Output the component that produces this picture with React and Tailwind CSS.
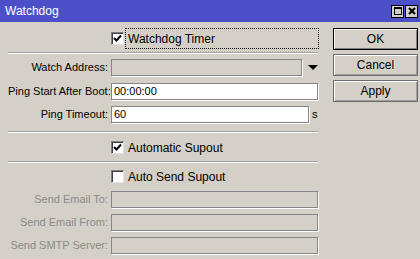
import React from "react";

const font = { fontFamily: '"Liberation Sans", Arial, sans-serif' };

function Check({ checked }) {
  return (
    <div className="w-[13px] h-[13px] bg-white border border-t-[#808080] border-l-[#808080] border-b-[#e0e0e0] border-r-[#e0e0e0] shadow-[inset_1px_1px_0_#404040] flex items-center justify-center shrink-0">
      {checked && (
        <svg width="9" height="9" viewBox="0 0 9 9">
          <path d="M1 4 L3.5 6.5 L8 1.5" stroke="#000" strokeWidth="2" fill="none" />
        </svg>
      )}
    </div>
  );
}

function Sep() {
  return <div className="h-[2px] border-t border-t-[#a0a0a0] border-b border-b-white w-[310px]" />;
}

function Field({ label, value, disabled, mt, after, width = "w-[207px]" }) {
  return (
    <div className={`flex items-center h-[17px] ${mt}`}>
      <div className={`w-[103px] pr-[3px] text-right whitespace-nowrap ${disabled ? "text-[#8a8a8a]" : "text-black"}`}>
        {label}
      </div>
      <div
        className={`${width} h-[17px] border border-[#858585] shadow-[1px_1px_0_#fff] px-[2px] flex items-center ${
          disabled ? "bg-[#d4d0c8]" : value !== undefined ? "bg-white" : "bg-[#d4d0c8]"
        }`}
      >
        {value}
      </div>
      {after}
    </div>
  );
}

function Btn({ children, def, mt }) {
  return (
    <div
      className={`w-[85px] h-[22px] flex items-center justify-center ${mt} ${
        def ? "border border-black shadow-[inset_1px_1px_0_#fff,inset_-1px_-1px_0_#808080]" : "border border-[#6a6a6a] shadow-[inset_1px_1px_0_#fff,inset_-1px_-1px_0_#a0a0a0]"
      }`}
    >
      {children}
    </div>
  );
}

export default function App() {
  return (
    <div className="w-[420px] h-[259px] bg-[#d4d0c8] text-[11px] text-black overflow-hidden" style={font}>
      {/* TITLE BAR */}
      <div className="h-[22px] bg-[#4b50c9] flex items-center justify-between pl-[5px] pr-[2px]">
        <span className="text-white text-[12px]">Watchdog</span>
        <div className="flex gap-[1px]">
          <div className="w-[13px] h-[13px] bg-[#d4d0c8] border border-black flex items-center justify-center">
            <div className="w-[8px] h-[8px] border border-black border-t-2" />
          </div>
          <div className="w-[13px] h-[13px] bg-[#d4d0c8] border border-black flex items-center justify-center">
            <svg width="8" height="8" viewBox="0 0 8 8">
              <path d="M1 1 L7 7 M7 1 L1 7" stroke="#000" strokeWidth="2" />
            </svg>
          </div>
        </div>
      </div>

      <div className="flex">
        {/* LEFT */}
        <div className="w-[320px] pl-[8px] flex flex-col">
          <div className="flex items-center h-[21px] mt-[6px]">
            <div className="w-[103px]" />
            <Check checked />
            <div className="ml-[1px] w-[194px] h-[21px] border border-dotted border-black flex items-center pl-[2px] text-[12px]">
              Watchdog Timer
            </div>
          </div>
          <div className="mt-[3px]">
            <Sep />
          </div>

          <Field
            label="Watch Address:"
            mt="mt-[5px]"
            width="w-[191px]"
            after={
              <svg className="ml-[6px]" width="10" height="6" viewBox="0 0 10 6">
                <path d="M0 0 L10 0 L5 5 Z" fill="#000" />
              </svg>
            }
          />
          <Field label="Ping Start After Boot:" value="00:00:00" mt="mt-[7px]" />
          <Field
            label="Ping Timeout:"
            value="60"
            mt="mt-[6px]"
            width="w-[198px]"
            after={<span className="ml-[3px]">s</span>}
          />

          <div className="mt-[8px]">
            <Sep />
          </div>
          <div className="flex items-center h-[17px] mt-[6px]">
            <div className="w-[103px]" />
            <Check checked />
            <span className="ml-[4px] text-[12px]">Automatic Supout</span>
          </div>
          <div className="mt-[5px]">
            <Sep />
          </div>
          <div className="flex items-center h-[17px] mt-[5px]">
            <div className="w-[103px]" />
            <Check />
            <span className="ml-[4px] text-[12px]">Auto Send Supout</span>
          </div>

          <Field label="Send Email To:" disabled mt="mt-[6px]" />
          <Field label="Send Email From:" disabled mt="mt-[6px]" />
          <Field label="Send SMTP Server:" disabled mt="mt-[6px]" />
        </div>

        {/* RIGHT */}
        <div className="ml-[13px] flex flex-col text-[12px]">
          <Btn def mt="mt-[6px]">OK</Btn>
          <Btn mt="mt-[4px]">Cancel</Btn>
          <Btn mt="mt-[4px]">Apply</Btn>
        </div>
      </div>
    </div>
  );
}
